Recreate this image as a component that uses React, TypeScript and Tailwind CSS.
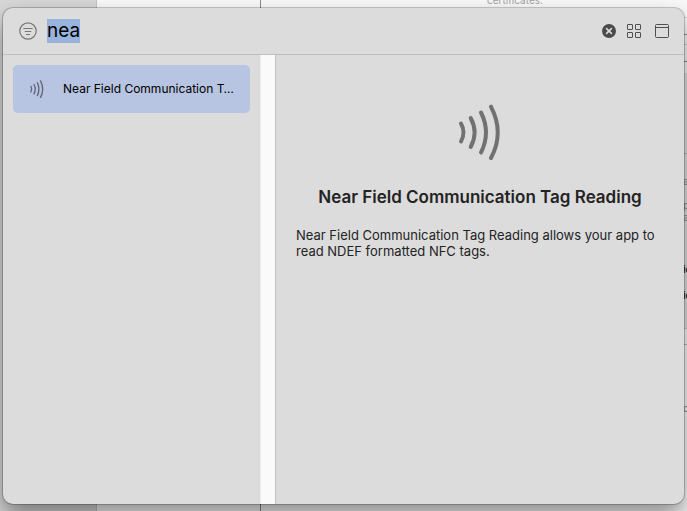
import { useState } from "react";

interface Capability {
    id: string;
    name: string;
    description: string;
}

const capabilities: Capability[] = [
    {
        id: "nfc",
        name: "Near Field Communication Tag Reading",
        description:
            "Near Field Communication Tag Reading allows your app to read NDEF formatted NFC tags.",
    },
];

function WavesIcon({ className }: { className: string }) {
    return (
        <svg
            viewBox="0 0 44 56"
            className={className}
            fill="none"
            stroke="currentColor"
            strokeWidth="4"
            strokeLinecap="round"
            aria-hidden="true"
        >
            <path d="M3 19.5Q8 28.5 3 37.5" />
            <path d="M12.7 14Q20.5 28.5 12.7 43" />
            <path d="M23 8.500Q33 28.500 23 48.500" />
            <path d="M33 2.700Q46.500 28.500 33 54" />
        </svg>
    );
}

function FilterIcon() {
    return (
        <svg
            viewBox="0 0 18 18"
            className="size-[18px]"
            fill="none"
            stroke="currentColor"
            strokeLinecap="round"
            aria-hidden="true"
        >
            <circle cx="9" cy="9" r="8.2" strokeWidth="1.2" />
            <path d="M4.700 6.500h8.600M6.200 9.500h5.600M7.500 12.500h3" strokeWidth="1.2" />
        </svg>
    );
}

function ClearIcon() {
    return (
        <svg viewBox="0 0 14 14" className="size-3.5" aria-hidden="true">
            <circle cx="7" cy="7" r="7" fill="#4b4b4b" />
            <path
                d="M4.600 4.600l4.800 4.800M9.400 4.600l-4.800 4.800"
                stroke="#dcdcdc"
                strokeWidth="1.6"
                strokeLinecap="round"
            />
        </svg>
    );
}

function GridIcon() {
    return (
        <svg
            viewBox="0 0 14 14"
            className="size-3.5"
            fill="none"
            stroke="#4f4f4f"
            aria-hidden="true"
        >
            <rect x=".5" y=".5" width="5" height="5" rx=".4" />
            <rect x="8.500" y=".5" width="5" height="5" rx=".4" />
            <rect x=".5" y="8.500" width="5" height="5" rx=".4" />
            <rect x="8.500" y="8.500" width="5" height="5" rx=".4" />
        </svg>
    );
}

function PanelIcon() {
    return (
        <svg
            viewBox="0 0 14 14"
            className="size-3.5"
            fill="none"
            stroke="#4f4f4f"
            aria-hidden="true"
        >
            <rect x=".5" y=".5" width="13" height="13" rx="1" />
            <path d="M.5 3.500h13" />
        </svg>
    );
}

// Editor window that sits behind the library panel
function Backdrop() {
    return (
        <div
            aria-hidden="true"
            className="absolute inset-0 flex overflow-hidden bg-[#fafafa] text-[10px] leading-3 text-[#8a8a8a]"
        >
            <div className="w-[97px] shrink-0 border-r border-[#c4c4c4] bg-[#d8d8d8]" />
            <div className="w-[164px] shrink-0 border-r border-[#8a8a8a]" />
            <div className="flex-1">
                <p className="-mt-[6px] ml-[226px] text-[#a3a3a3]">certificates.</p>
            </div>
            <div className="flex w-1 shrink-0 flex-col">
                <div className="h-[18px] border-b border-[#d4d4d4]" />
                <div className="h-[17px] border-b border-[#999999]" />
                <div className="h-[10px] border-b border-[#d4d4d4]" />
                <div className="h-[17px] border-b border-[#888888]" />
                <div className="h-[11px]" />
                <div className="h-[81px] border-b border-[#bbbbbb] bg-[#e4e4e4]" />
                <div className="h-[175px] overflow-hidden border-b border-[#cfcfcf] bg-[#e4e4e4] pt-[21px]">
                    <p>a</p>
                    <p className="mt-3">p</p>
                    <p>a</p>
                    <p className="mt-10 font-semibold text-[#222222]">ic</p>
                    <p className="mt-[14px] font-semibold text-[#222222]">ic</p>
                </div>
                <div className="h-4 border-b border-[#bbbbbb]" />
                <p className="mt-[57px]">c</p>
            </div>
        </div>
    );
}

export default function App() {
    const [query, setQuery] = useState("nea");
    const [selectedId, setSelectedId] = useState("nfc");
    const selected =
        capabilities.find((item) => item.id === selectedId) ?? capabilities[0];

    return (
        <div className="relative flex min-h-screen px-[3px] pt-2 pb-[7px] font-['Inter','Liberation_Sans',sans-serif]">
            <Backdrop />

            <main className="relative flex flex-1 flex-col overflow-hidden rounded-[10px] bg-[#dcdcdc] shadow-[0_0_0_1px_rgba(0,0,0,0.2),0_12px_24px_rgba(0,0,0,0.45)]">
                <header className="flex h-[47px] shrink-0 items-center border-b border-[#bfbfbf] pr-[15px] pl-4">
                    <button type="button" aria-label="Filter" className="text-[#777777]">
                        <FilterIcon />
                    </button>
                    <input
                        type="text"
                        aria-label="Search capabilities"
                        value={query}
                        onChange={(e) => setQuery(e.target.value)}
                        className="ml-2.5 h-6 min-w-0 field-sizing-content bg-[#98b3dc] text-[19px] leading-6 text-black outline-none"
                    />
                    <div className="ml-auto flex items-center gap-3.5">
                        <button
                            type="button"
                            aria-label="Clear search"
                            onClick={() => setQuery("")}
                            className="-mr-[3px]"
                        >
                            <ClearIcon />
                        </button>
                        <button type="button" aria-label="Grid view">
                            <GridIcon />
                        </button>
                        <button type="button" aria-label="Toggle details">
                            <PanelIcon />
                        </button>
                    </div>
                </header>

                <div className="flex flex-1">
                    <ul className="w-[257px] shrink-0 p-2.5">
                        {capabilities.map((item) => (
                            <li key={item.id}>
                                <button
                                    type="button"
                                    onClick={() => setSelectedId(item.id)}
                                    className={`flex h-12 w-full items-center rounded-[5px] pr-3 pl-4 text-left ${
                                        item.id === selectedId ? "bg-[#b7c4e2]" : ""
                                    }`}
                                >
                                    <WavesIcon className="h-[18px] w-4 shrink-0 text-[#5f6475]" />
                                    <span className="ml-[18px] truncate text-xs leading-4 text-black">
                                        {item.name}
                                    </span>
                                </button>
                            </li>
                        ))}
                    </ul>

                    <div className="w-4 shrink-0 border-r border-l border-r-[#c2c2c2] border-l-[#ececec] bg-[#fafafa]" />

                    <section className="flex min-w-0 flex-1 flex-col px-5 pt-[49px]">
                        <WavesIcon className="h-14 w-11 self-center text-[#717171]" />
                        <h1 className="mt-6 text-center text-[17px] leading-[26px] font-semibold text-[#232323]">
                            {selected.name}
                        </h1>
                        <p className="mt-[17px] text-[13px] leading-4 text-[#232323]">
                            {selected.description}
                        </p>
                    </section>
                </div>
            </main>
        </div>
    );
}
